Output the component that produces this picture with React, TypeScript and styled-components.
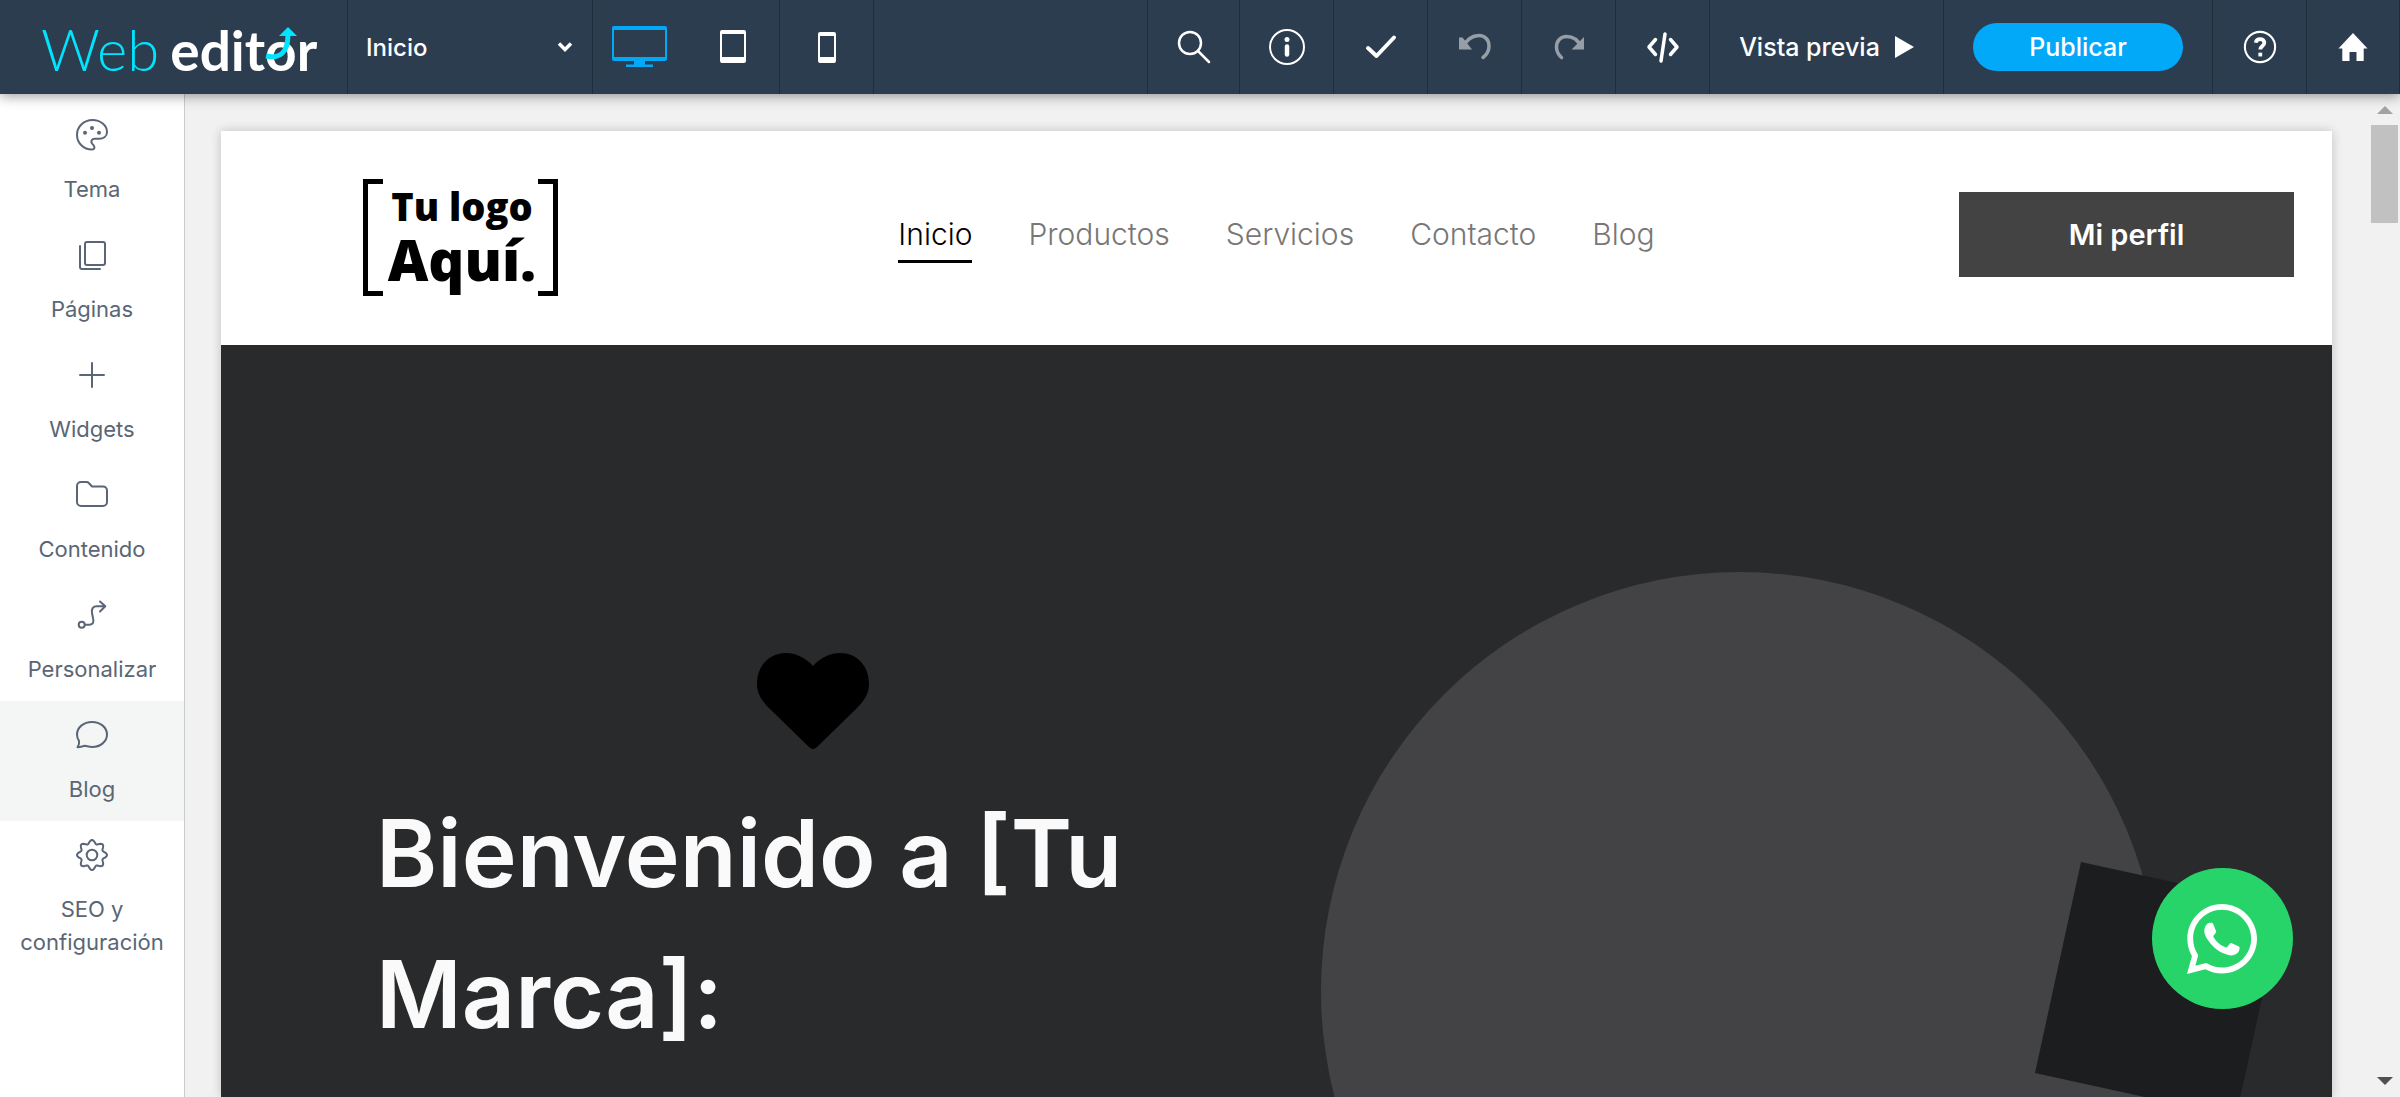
import React from "react";
import styled, { createGlobalStyle, css } from "styled-components";
import { FaWhatsapp } from "react-icons/fa";

const GlobalStyle = createGlobalStyle`
  *, *::before, *::after { box-sizing: border-box; }
  body { margin: 0; font-family: Inter, "Liberation Sans", sans-serif; }
  button, select { font: inherit; color: inherit; }
  h1 { margin: 0; }
`;

const Shell = styled.div`
  display: flex;
  flex-direction: column;
  height: 100vh;
  overflow: hidden;
  background: #f1f1f1;
`;

/* ---------- Top bar ---------- */

const TopBar = styled.header`
  position: relative;
  z-index: 2;
  display: flex;
  flex: none;
  height: 94px;
  border-right: 1px solid #1f2d3c;
  background: #2d3d50;
  color: #fff;
  font-size: 25px;
  font-weight: 500;
  box-shadow: 0 2px 12px rgba(0, 0, 0, 0.4);
`;

const Brand = styled.a`
  position: relative;
  display: flex;
  align-items: baseline;
  gap: 11px;
  width: 347px;
  padding: 19px 0 0 41px;
  color: #fff;
  text-decoration: none;
  font-family: Lato, sans-serif;
  font-size: 55px;
  line-height: 60px;
`;

const BrandThin = styled.span`
  color: #00e5ff;
  font-size: 58px;
  font-weight: 300;
`;

const BrandBold = styled.span`
  font-weight: 700;
`;

const BrandArrow = styled.svg`
  position: absolute;
  left: 264px;
  top: 26px;
`;

const cell = css`
  display: flex;
  flex: none;
  align-items: center;
  justify-content: center;
  padding: 0;
  border: 0;
  border-left: 1px solid #1f2d3c;
  background: none;
`;

const PageSelect = styled.label`
  ${cell}
  position: relative;
  width: 245px;
  font-size: 24px;

  select {
    width: 100%;
    height: 100%;
    padding: 0 18px;
    border: 0;
    background: transparent;
    appearance: none;
  }

  svg {
    position: absolute;
    right: 19px;
    pointer-events: none;
  }
`;

const BarButton = styled.button<{ $width?: number; $plain?: boolean; $dim?: boolean }>`
  ${cell}
  gap: 15px;
  width: ${(p) => p.$width ?? 94}px;
  ${(p) => p.$plain && "border-left: 0;"}
  svg { opacity: ${(p) => (p.$dim ? 0.5 : 1)}; }
`;

const Spacer = styled.div`
  flex: 1;
  border-left: 1px solid #1f2d3c;
`;

const PublishCell = styled.div`
  ${cell}
  width: 269px;
`;

const Publish = styled.button`
  width: 210px;
  height: 48px;
  border: 0;
  border-radius: 24px;
  background: #03a9f9;
`;

/* ---------- Workspace ---------- */

const Workspace = styled.div`
  display: flex;
  flex: 1;
  min-height: 0;
`;

const Sidebar = styled.nav`
  flex: none;
  width: 185px;
  padding-top: 7px;
  border-right: 1px solid #c9cbcd;
  background: #fff;
`;

const SideItem = styled.button<{ $active?: boolean }>`
  display: flex;
  flex-direction: column;
  align-items: center;
  gap: 22px;
  width: 100%;
  min-height: 120px;
  padding: 18px 10px 15px;
  border: 0;
  background: ${(p) => (p.$active ? "#f4f6f6" : "transparent")};
  color: #5a6675;
  font-size: 22px;
  font-weight: 400;
  line-height: 33px;
`;

const Canvas = styled.main`
  display: flex;
  flex: 1;
  min-width: 0;
  padding: 37px 39px 0 36px;
`;

const Page = styled.div`
  display: flex;
  flex: 1;
  flex-direction: column;
  min-width: 0;
  background: #fff;
  box-shadow: 0 0 10px rgba(0, 0, 0, 0.2);
`;

const ScrollTrack = styled.div`
  display: flex;
  flex: none;
  flex-direction: column;
  align-items: center;
  width: 29px;
  padding: 12px 2px 12px 0;
  background: #f1f1f1;
`;

const ScrollThumb = styled.div`
  width: 27px;
  height: 98px;
  margin: 11px 0 auto;
  background: #c1c1c1;
`;

/* ---------- Site header ---------- */

const SiteHeader = styled.div`
  display: grid;
  grid-template-columns: 1fr auto 1fr;
  flex: none;
  align-items: center;
  height: 214px;
  padding: 0 38px 8px;
`;

const SiteLogo = styled.div`
  display: flex;
  width: 195px;
  height: 117px;
  margin: 7px 0 0 104px;
  justify-content: space-between;
  color: #000;
  font-family: "Open Sans", "Noto Sans", sans-serif;
  font-weight: 800;
  text-align: center;

  &::before,
  &::after {
    content: "";
    width: 20px;
    border: 5px solid #000;
  }
  &::before { border-right: 0; }
  &::after { border-left: 0; }
`;

const LogoText = styled.div`
  display: flex;
  flex-direction: column;
  justify-content: center;
  padding: 0 0 10px 3px;
`;

const LogoLine = styled.span<{ $size: number }>`
  font-size: ${(p) => p.$size}px;
  line-height: 53px;
`;

const SiteNav = styled.nav`
  display: flex;
  gap: 56px;
`;

const NavLink = styled.a<{ $current?: boolean }>`
  padding: 10px 0 8px;
  border-bottom: 3px solid ${(p) => (p.$current ? "#000" : "transparent")};
  color: ${(p) => (p.$current ? "#000" : "#777")};
  font-size: 30px;
  font-weight: 300;
  line-height: 36px;
  text-decoration: none;
`;

const ProfileButton = styled.button`
  justify-self: end;
  width: 335px;
  height: 85px;
  border: 0;
  background: #434343;
  color: #fff;
  font-size: 29px;
  font-weight: 600;
`;

/* ---------- Hero ---------- */

const Hero = styled.section`
  display: flex;
  flex: 1;
  min-height: 0;
  justify-content: space-between;
  overflow: hidden;
  background: #292a2c;
`;

const HeroCopy = styled.div`
  flex: none;
  width: 873px;
  margin-left: 155px;
  padding-top: 308px;
  color: #fafafa;
`;

const HeroIcon = styled.svg`
  display: block;
  margin: 0 auto 34px;
`;

const HeroTitle = styled.h1`
  font-size: 93px;
  font-weight: 600;
  line-height: 141px;
`;

const HeroArt = styled.svg`
  flex: none;
  margin: 227px 69px 0 0;
`;

const WhatsappButton = styled.a`
  position: fixed;
  right: 107px;
  bottom: 88px;
  display: flex;
  align-items: center;
  justify-content: center;
  width: 141px;
  height: 141px;
  padding-right: 2px;
  border-radius: 50%;
  background: #27d469;
  color: #fff;
  font-size: 80px;
`;

/* ---------- Icons ---------- */

const gearPath =
  Array.from({ length: 97 }, (_, i) => {
    const a = (i / 96) * Math.PI * 2;
    const r = 13.2 + 1.8 * Math.cos(8 * a);
    return `${i ? "L" : "M"}${(16 + r * Math.sin(a)).toFixed(2)} ${(16 - r * Math.cos(a)).toFixed(2)}`;
  }).join("") + "Z";

const icons: Record<string, React.ReactNode> = {
  theme: (
    <>
      <path d="M16 30.5C7.500 30.500 1 24 1 16 1 7.500 8 1 16.500 1 24.500 1 31 6.500 31 13c0 4.500-3.500 6.800-8 6.800h-4.200c-3 0-4.300 2.400-2.800 4.700 1.200 1.500 2.200 1.800 2.400 3.500.1 1.500-.8 2.500-2.400 2.500Z" />
      <g fill="currentColor" stroke="none">
        <circle cx="9" cy="13.700" r="2" />
        <circle cx="16" cy="9" r="2" />
        <circle cx="23" cy="13.700" r="2" />
      </g>
    </>
  ),
  pages: (
    <>
      <rect x="9" y="3" width="20" height="23" rx="2" />
      <path d="M4 7v21a2 2 0 0 0 2 2h18" />
    </>
  ),
  widgets: <path d="M16 4v24M4 16h24" />,
  content: (
    <path d="M5 3h5.500c1 0 1.700.3 2.300 1L16 7.500h11a4 4 0 0 1 4 4V23a4 4 0 0 1-4 4H5a4 4 0 0 1-4-4V7a4 4 0 0 1 4-4Z" />
  ),
  custom: (
    <>
      <circle cx="5.700" cy="25.700" r="3" />
      <path d="M9 25.700h4.500c3.500 0 4.500-2.200 3.600-6.200L16 14c-.8-4 1-6.700 4.800-6.700H29M24 2.500l5.300 4.800L24 12.500" />
    </>
  ),
  blog: (
    <path d="M16 3c8.500 0 15 5.500 15 12.500S24.500 28 16 28c-2.600 0-5-.9-7-1.200-2.500.2-4.500 1.500-7.500 1.400C3 26 3.500 24 3 21.800 1.700 20 1 17.800 1 15.500 1 8.500 7.500 3 16 3Z" />
  ),
  seo: (
    <>
      <path d={gearPath} />
      <circle cx="16" cy="16" r="5.300" />
    </>
  ),
};

const SideIcon = ({ name }: { name: string }) => (
  <svg width="32" height="32" viewBox="0 0 32 32" fill="none" stroke="currentColor" strokeWidth="2" strokeLinecap="round" strokeLinejoin="round">
    {icons[name]}
  </svg>
);

const Stroke = ({ size = 36, width = 3, children }: { size?: number; width?: number; children: React.ReactNode }) => (
  <svg width={size} height={size} viewBox="0 0 36 36" fill="none" stroke="#fff" strokeWidth={width} strokeLinecap="round" strokeLinejoin="round">
    {children}
  </svg>
);

const sideItems = [
  { id: "theme", label: "Tema" },
  { id: "pages", label: "Páginas" },
  { id: "widgets", label: "Widgets" },
  { id: "content", label: "Contenido" },
  { id: "custom", label: "Personalizar" },
  { id: "blog", label: "Blog", active: true },
  { id: "seo", label: "SEO y configuración" },
];

const navItems = ["Inicio", "Productos", "Servicios", "Contacto", "Blog"];

export default function App() {
  return (
    <Shell>
      <GlobalStyle />
      <TopBar>
        <Brand href="#">
          <BrandThin>Web</BrandThin>
          <BrandBold>editor</BrandBold>
          <BrandArrow width="34" height="34" viewBox="0 0 34 34" aria-hidden="true">
            <path d="M2 30C16 33 24 27 24 8" fill="none" stroke="#00e5ff" strokeWidth="5" />
            <path d="M24 1l9 9H15z" fill="#00e5ff" />
          </BrandArrow>
        </Brand>
        <PageSelect>
          <select defaultValue="Inicio" aria-label="Página">
            {navItems.map((n) => (
              <option key={n}>{n}</option>
            ))}
          </select>
          <svg width="16" height="12" viewBox="0 0 16 12" fill="none" stroke="#fff" strokeWidth="3.500">
            <path d="M2 2.500l6 6 6-6" />
          </svg>
        </PageSelect>
        <BarButton aria-label="Escritorio">
          <svg width="55" height="42" viewBox="0 0 55 42" fill="#03a9f9">
            <path fillRule="evenodd" d="M2 0h51a2 2 0 0 1 2 2v31a2 2 0 0 1-2 2H33v3.500h8V41H14v-2.500h8V35H2a2 2 0 0 1-2-2V2a2 2 0 0 1 2-2Zm0 4v27h51V4Z" />
          </svg>
        </BarButton>
        <BarButton $plain $width={93} aria-label="Tableta">
          <svg width="26" height="34" viewBox="0 0 26 34" fill="#fff">
            <path fillRule="evenodd" d="M2 0h22a2 2 0 0 1 2 2v29a2 2 0 0 1-2 2H2a2 2 0 0 1-2-2V2a2 2 0 0 1 2-2Zm0 4v23h22V4Z" />
          </svg>
        </BarButton>
        <BarButton aria-label="Móvil">
          <svg width="18" height="31" viewBox="0 0 18 31" fill="#fff">
            <path fillRule="evenodd" d="M2 0h14a2 2 0 0 1 2 2v27a2 2 0 0 1-2 2H2a2 2 0 0 1-2-2V2a2 2 0 0 1 2-2Zm0 4v21h14V4Z" />
          </svg>
        </BarButton>
        <Spacer />
        <BarButton $width={92} aria-label="Buscar">
          <Stroke width={2.5}>
            <circle cx="14" cy="14" r="11" />
            <path d="M22 22l11 11" />
          </Stroke>
        </BarButton>
        <BarButton aria-label="Información">
          <Stroke width={2}>
            <circle cx="18" cy="18" r="17" />
            <path d="M18 17.500v8" strokeWidth="4.500" />
            <circle cx="18" cy="10.500" r="2.500" fill="#fff" stroke="none" />
          </Stroke>
        </BarButton>
        <BarButton aria-label="Guardar">
          <Stroke width={4}>
            <path d="M5 19l8.500 8L31 8.500" />
          </Stroke>
        </BarButton>
        <BarButton $dim aria-label="Deshacer">
          <Stroke width={3.5}>
            <path d="M6 18C10 10 16 6.500 22 6.500c6 0 10 4.500 10 10.500 0 5-2 8.500-6 11.500" />
            <path d="M3 9.500h2l8 10H3Z" fill="#fff" strokeWidth="2" strokeLinejoin="miter" />
          </Stroke>
        </BarButton>
        <BarButton $dim aria-label="Rehacer">
          <Stroke width={3.5}>
            <path d="M30 18C27 10.500 21 7.500 15.500 7.500 9.500 7.500 5.500 12 5.500 18c0 4 1.500 7.500 5 10.500" />
            <path d="M32 10.500v9h-9Z" fill="#fff" strokeWidth="2" strokeLinejoin="miter" />
          </Stroke>
        </BarButton>
        <BarButton aria-label="Código">
          <Stroke width={3.5}>
            <path d="M10.500 10.500L4 18l6.500 7.500M25.500 10.500L32 18l-6.500 7.500M20 5l-4 27" />
          </Stroke>
        </BarButton>
        <BarButton $width={234}>
          Vista previa
          <svg width="19" height="22" viewBox="0 0 19 22" fill="#fff">
            <path d="M0 0l19 11L0 22z" />
          </svg>
        </BarButton>
        <PublishCell>
          <Publish>Publicar</Publish>
        </PublishCell>
        <BarButton aria-label="Ayuda">
          <Stroke size={34} width={2.2}>
            <circle cx="18" cy="18" r="16" />
            <path d="M13.500 13.500c.5-2.500 2-3.800 4.600-3.800 2.800 0 4.500 1.600 4.500 3.800 0 3.500-4.300 3.300-4.300 7.200" strokeWidth="4" strokeLinecap="butt" />
            <path d="M16.300 24h4v4h-4z" fill="#fff" stroke="none" />
          </Stroke>
        </BarButton>
        <BarButton $width={93} aria-label="Panel">
          <svg width="30" height="30" viewBox="0 0 30 30" fill="#fff">
            <path d="M15 1l14.500 15.500h-3.800V29H18.500v-9h-7v9H4.300V16.500H.5z" />
          </svg>
        </BarButton>
      </TopBar>

      <Workspace>
        <Sidebar aria-label="Editor">
          {sideItems.map((item) => (
            <SideItem key={item.id} $active={item.active}>
              <SideIcon name={item.id} />
              {item.label}
            </SideItem>
          ))}
        </Sidebar>

        <Canvas>
          <Page>
            <SiteHeader>
              <SiteLogo>
                <LogoText>
                  <LogoLine $size={38}>Tu logo</LogoLine>
                  <LogoLine $size={56}>Aquí.</LogoLine>
                </LogoText>
              </SiteLogo>
              <SiteNav aria-label="Sitio">
                {navItems.map((n, i) => (
                  <NavLink key={n} href="#" $current={i === 0}>
                    {n}
                  </NavLink>
                ))}
              </SiteNav>
              <ProfileButton>Mi perfil</ProfileButton>
            </SiteHeader>
            <Hero>
              <HeroCopy>
                <HeroIcon width="112" height="96" viewBox="0 0 112 96" aria-hidden="true">
                  <path d="M56 13C48 4 38 0 29 0 12 0 0 13 0 31c0 10 5 17 13 25l39 38q4 4 8 0l39-38c8-8 13-15 13-25C112 13 100 0 83 0 74 0 64 4 56 13Z" />
                </HeroIcon>
                <HeroTitle>Bienvenido a [Tu Marca]:</HeroTitle>
              </HeroCopy>
              <HeroArt width="942" height="838" viewBox="0 0 942 838" aria-hidden="true">
                <circle cx="419" cy="419" r="419" fill="#434345" />
                <path d="M760 290l201 44-46 211-201-44z" fill="#1c1d1f" />
              </HeroArt>
            </Hero>
          </Page>
        </Canvas>

        <ScrollTrack aria-hidden="true">
          <svg width="16" height="8" viewBox="0 0 16 8" fill="#a3a3a3">
            <path d="M8 0l8 8H0z" />
          </svg>
          <ScrollThumb />
          <svg width="16" height="8" viewBox="0 0 16 8" fill="#505050">
            <path d="M0 0h16L8 8z" />
          </svg>
        </ScrollTrack>
      </Workspace>

      <WhatsappButton href="#" aria-label="WhatsApp">
        <FaWhatsapp />
      </WhatsappButton>
    </Shell>
  );
}
